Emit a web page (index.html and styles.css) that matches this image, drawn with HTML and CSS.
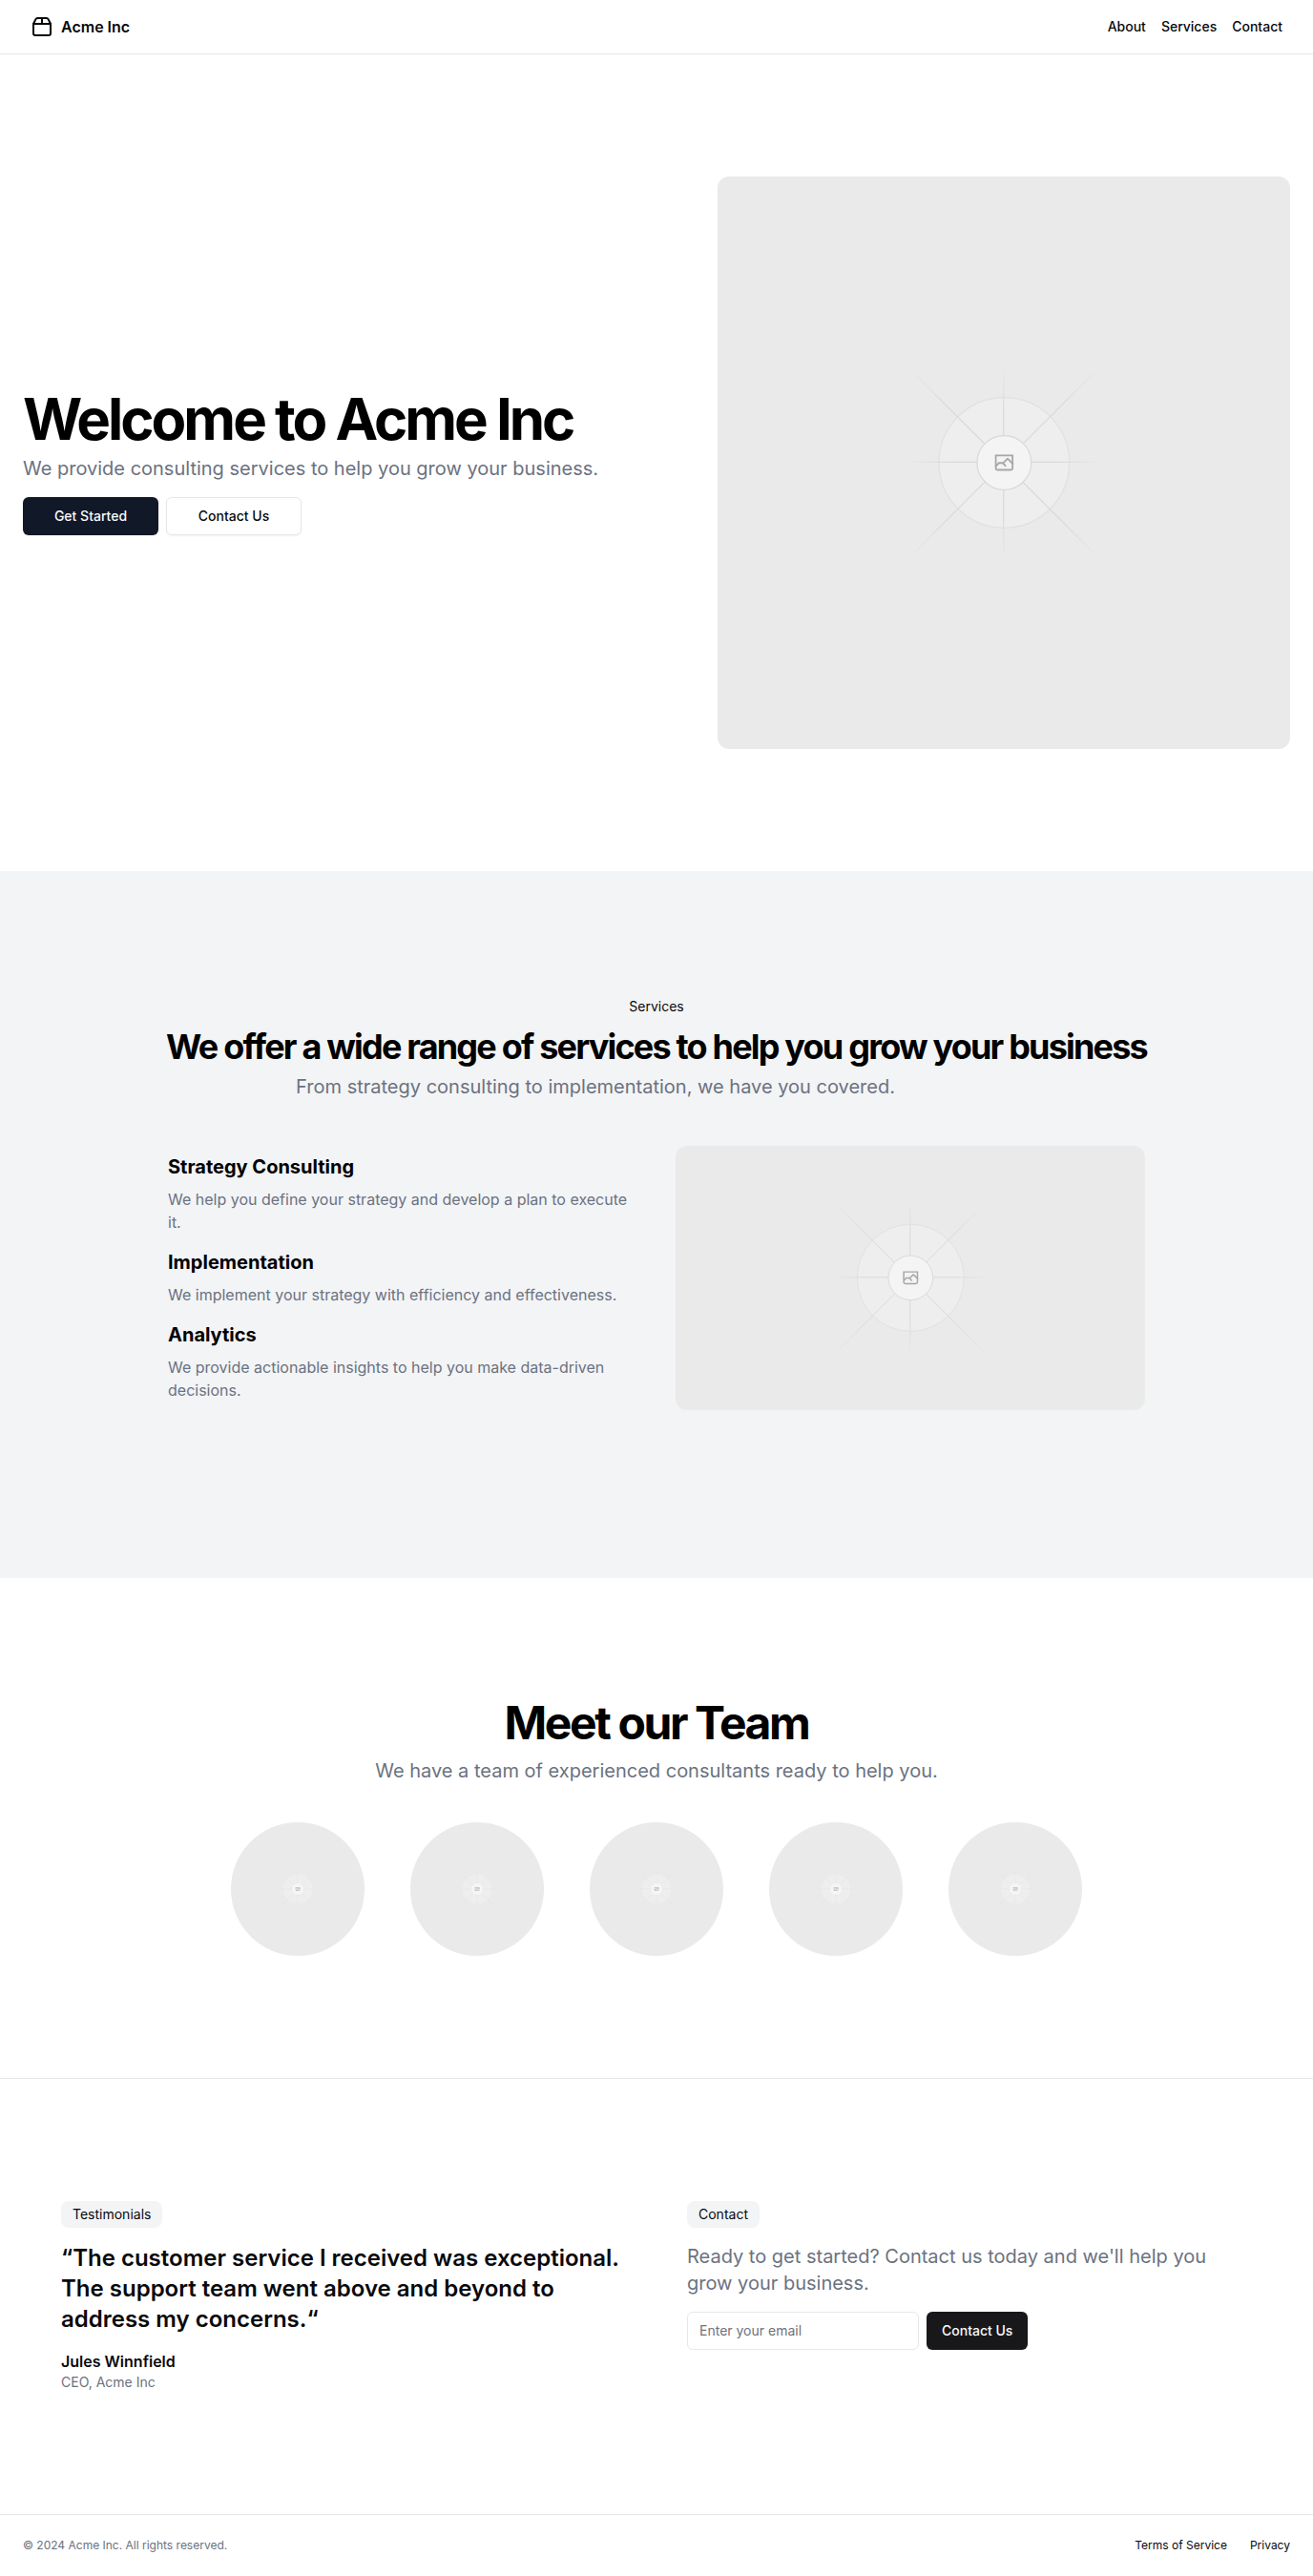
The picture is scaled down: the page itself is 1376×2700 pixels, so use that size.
FILE: index.html
```html
<!DOCTYPE html>
<html lang="en">
<head>
<meta charset="utf-8">
<meta name="viewport" content="width=device-width, initial-scale=1">
<title>Acme Inc</title>
<link rel="stylesheet" href="styles.css">
</head>
<body>
<svg class="sprite" aria-hidden="true">
  <defs>
    <linearGradient id="fade-h" x1="404" y1="0" x2="797" y2="0" gradientUnits="userSpaceOnUse"><stop stop-color="#c9c9c9" stop-opacity="0"/><stop offset=".208" stop-color="#c9c9c9"/><stop offset=".792" stop-color="#c9c9c9"/><stop offset="1" stop-color="#c9c9c9" stop-opacity="0"/></linearGradient>
    <linearGradient id="fade-v" x1="0" y1="404" x2="0" y2="796" gradientUnits="userSpaceOnUse"><stop stop-color="#c9c9c9" stop-opacity="0"/><stop offset=".208" stop-color="#c9c9c9"/><stop offset=".792" stop-color="#c9c9c9"/><stop offset="1" stop-color="#c9c9c9" stop-opacity="0"/></linearGradient>
    <symbol id="placeholder" viewBox="0 0 1200 1200" preserveAspectRatio="xMidYMid slice">
      <rect width="1200" height="1200" fill="#eaeaea"/>
      <g opacity=".5" fill="none" stroke-width="2.418">
        <circle cx="600.7" cy="599.9" r="136.6" fill="#fafafa" stroke="#c9c9c9" opacity=".5"/>
        <path stroke="url(#fade-h)" d="M404.8 795.7 796.3 404.2"/>
        <path stroke="url(#fade-h)" d="M404.8 598.7h391.8"/>
        <path stroke="url(#fade-v)" d="M599.5 795.7V404"/>
        <path stroke="url(#fade-h)" d="M795.7 796.6 404.3 405.2"/>
        <circle cx="600.7" cy="599.9" r="56.8" fill="#fff" stroke="#c9c9c9"/>
        <path fill="#666" fill-rule="evenodd" d="M616.426 586.58h-31.434v16.176l3.553-3.554.531-.531h9.068l.074-.074 8.463-8.463h2.565l7.18 7.181V586.58Zm-15.715 14.654 3.698 3.699 1.283 1.282-2.565 2.565-1.282-1.283-5.2-5.199h-6.066l-5.514 5.514-.073.073v2.876a2.418 2.418 0 0 0 2.418 2.418h26.598a2.418 2.418 0 0 0 2.418-2.418v-8.317l-8.463-8.463-7.181 7.181-.071.072Zm-19.347 5.442v4.085a6.045 6.045 0 0 0 6.046 6.045h26.598a6.044 6.044 0 0 0 6.045-6.045v-7.108l1.356-1.355-1.282-1.283-.074-.073v-17.989h-38.689v23.43l-.146.146.146.147Z"/>
      </g>
    </symbol>
  </defs>
</svg>

<header class="site-header">
  <a class="brand" href="#">
    <svg class="brand-icon" viewBox="0 0 24 24" fill="none" stroke="currentColor" stroke-width="2" stroke-linecap="round" stroke-linejoin="round" aria-hidden="true"><path d="M3 9h18v10a2 2 0 0 1-2 2H5a2 2 0 0 1-2-2V9Z"/><path d="m3 9 2.450-4.900A2 2 0 0 1 7.240 3h9.520a2 2 0 0 1 1.800 1.100L21 9"/><path d="M12 3v6"/></svg>
    <span>Acme Inc</span>
  </a>
  <nav class="site-nav">
    <a href="#about">About</a>
    <a href="#services">Services</a>
    <a href="#contact">Contact</a>
  </nav>
</header>

<main>
  <section class="hero" id="about">
    <div class="hero-copy">
      <h1>Welcome to Acme Inc</h1>
      <p class="lead">We provide consulting services to help you grow your business.</p>
      <div class="hero-actions">
        <a class="button button-navy" href="#services">Get Started</a>
        <a class="button button-outline" href="#contact">Contact Us</a>
      </div>
    </div>
    <svg class="hero-image" role="img" aria-label="Hero"><use href="#placeholder"/></svg>
  </section>

  <section class="services" id="services">
    <div class="services-intro">
      <div class="eyebrow">Services</div>
      <h2>We offer a wide range of services to help you grow your business</h2>
      <p class="lead">From strategy consulting to implementation, we have you covered.</p>
    </div>
    <div class="services-grid">
      <ul class="service-list">
        <li><h3>Strategy Consulting</h3><p>We help you define your strategy and develop a plan to execute it.</p></li>
        <li><h3>Implementation</h3><p>We implement your strategy with efficiency and effectiveness.</p></li>
        <li><h3>Analytics</h3><p>We provide actionable insights to help you make data-driven decisions.</p></li>
      </ul>
      <svg class="services-image" role="img" aria-label="Services"><use href="#placeholder"/></svg>
    </div>
  </section>

  <section class="team">
    <div class="team-intro">
      <h2>Meet our Team</h2>
      <p class="lead">We have a team of experienced consultants ready to help you.</p>
    </div>
    <div class="team-row">
      <svg class="avatar" role="img" aria-label="Team member"><use href="#placeholder"/></svg>
      <svg class="avatar" role="img" aria-label="Team member"><use href="#placeholder"/></svg>
      <svg class="avatar" role="img" aria-label="Team member"><use href="#placeholder"/></svg>
      <svg class="avatar" role="img" aria-label="Team member"><use href="#placeholder"/></svg>
      <svg class="avatar" role="img" aria-label="Team member"><use href="#placeholder"/></svg>
    </div>
  </section>

  <section class="closing" id="contact">
    <div class="closing-column">
      <div class="tag">Testimonials</div>
      <blockquote>“The customer service I received was exceptional. The support team went above and beyond to address my concerns.“</blockquote>
      <div>
        <div class="author">Jules Winnfield</div>
        <div class="role">CEO, Acme Inc</div>
      </div>
    </div>
    <div class="closing-column">
      <div class="tag">Contact</div>
      <p class="lead">Ready to get started? Contact us today and we'll help you grow your business.</p>
      <form class="contact-form">
        <input class="email" type="email" aria-label="Email" placeholder="Enter your email">
        <button class="button button-black" type="submit">Contact Us</button>
      </form>
    </div>
  </section>
</main>

<footer class="site-footer">
  <p>© 2024 Acme Inc. All rights reserved.</p>
  <nav class="footer-nav">
    <a href="#">Terms of Service</a>
    <a href="#">Privacy</a>
  </nav>
</footer>
</body>
</html>
```
FILE: styles.css
```css
*, *::before, *::after { box-sizing: border-box; }

body {
  margin: 0;
  background: #fff;
  color: #09090b;
  font: 400 16px/24px Inter, "Liberation Sans", sans-serif;
}

h1, h2, h3, p, ul, blockquote { margin: 0; padding: 0; }
ul { list-style: none; }
a { color: inherit; text-decoration: none; }
svg { display: block; }

.sprite { position: absolute; width: 0; height: 0; }

h1, h2 { color: #000; font-weight: 700; letter-spacing: -0.05em; }
h3 { color: #000; font-size: 20px; line-height: 28px; font-weight: 700; }

.lead { color: #6b7280; font-size: 20px; line-height: 28px; }

.site-header {
  display: flex;
  align-items: center;
  justify-content: space-between;
  height: 57px;
  padding: 0 32px;
  border-bottom: 1px solid #e5e7eb;
}
.brand { display: flex; align-items: center; gap: 8px; font-weight: 600; }
.brand-icon { width: 24px; height: 24px; }
.site-nav { display: flex; gap: 16px; font-size: 14px; line-height: 20px; font-weight: 500; }

.button {
  display: inline-flex;
  align-items: center;
  justify-content: center;
  height: 40px;
  border: 0;
  border-radius: 6px;
  font: 500 14px/20px Inter, "Liberation Sans", sans-serif;
  white-space: nowrap;
}
.hero-actions .button { min-width: 142px; box-shadow: 0 1px 2px rgb(0 0 0 / 5%); }
.button-navy { background: #111827; color: #f9fafb; }
.button-outline { border: 1px solid #e5e7eb; background: #fff; }
.button-black { padding: 0 16px; background: #18181b; color: #fafafa; }

.hero {
  display: grid;
  grid-template-columns: minmax(0, 1fr) 600px;
  align-items: center;
  gap: 48px;
  padding: 128px 24px;
}
.hero-copy h1 { margin-bottom: 8px; font-size: 60px; line-height: 60px; }
.hero-actions { display: flex; gap: 8px; margin-top: 16px; }
.hero-image { width: 100%; height: 600px; border-radius: 12px; }

.services {
  display: flex;
  flex-direction: column;
  align-items: center;
  padding: 128px 24px;
  background: #f3f4f6;
}
.services-intro { display: flex; flex-direction: column; gap: 8px; text-align: center; }
.services-intro h2 { font-size: 36px; line-height: 40px; }
.services-intro .lead { max-width: 900px; }
.eyebrow { padding: 4px 12px; font-size: 14px; line-height: 20px; }
.services-grid {
  display: grid;
  grid-template-columns: 1fr 1fr;
  align-items: center;
  gap: 40px;
  width: 100%;
  max-width: 1024px;
  padding: 48px 0;
}
.service-list { display: grid; gap: 16px; }
.service-list li { display: grid; gap: 8px; }
.service-list p { color: #6b7280; }
.services-image { width: 100%; height: auto; aspect-ratio: 16 / 9; border-radius: 12px; }

.team { display: grid; justify-items: center; gap: 40px; padding: 128px 24px; }
.team-intro { display: grid; gap: 12px; text-align: center; }
.team-intro h2 { font-size: 48px; line-height: 48px; }
.team-row { display: flex; flex-wrap: wrap; justify-content: center; gap: 48px; }
.avatar { width: 140px; height: 140px; border-radius: 50%; }

.closing {
  display: grid;
  grid-template-columns: 1fr 1fr;
  gap: 64px;
  padding: 128px 64px;
  border-top: 1px solid #e5e7eb;
}
.closing-column { display: flex; flex-direction: column; align-items: flex-start; gap: 16px; }
.tag { padding: 4px 12px; border-radius: 8px; background: #f3f4f6; font-size: 14px; line-height: 20px; }
blockquote { font-size: 24px; line-height: 32px; font-weight: 600; }
.author { font-weight: 600; }
.role { color: #6b7280; font-size: 14px; line-height: 20px; }
.contact-form { display: flex; gap: 8px; }
.email {
  width: 243px;
  height: 40px;
  padding: 8px 12px;
  border: 1px solid #e5e7eb;
  border-radius: 6px;
  background: #fff;
  color: inherit;
  font: 400 14px/20px Inter, "Liberation Sans", sans-serif;
}
.email::placeholder { color: #71717a; }

.site-footer {
  display: flex;
  align-items: center;
  justify-content: space-between;
  padding: 24px;
  border-top: 1px solid #e5e7eb;
  font-size: 12px;
  line-height: 16px;
}
.site-footer p { color: #6b7280; }
.footer-nav { display: flex; gap: 24px; }
```
